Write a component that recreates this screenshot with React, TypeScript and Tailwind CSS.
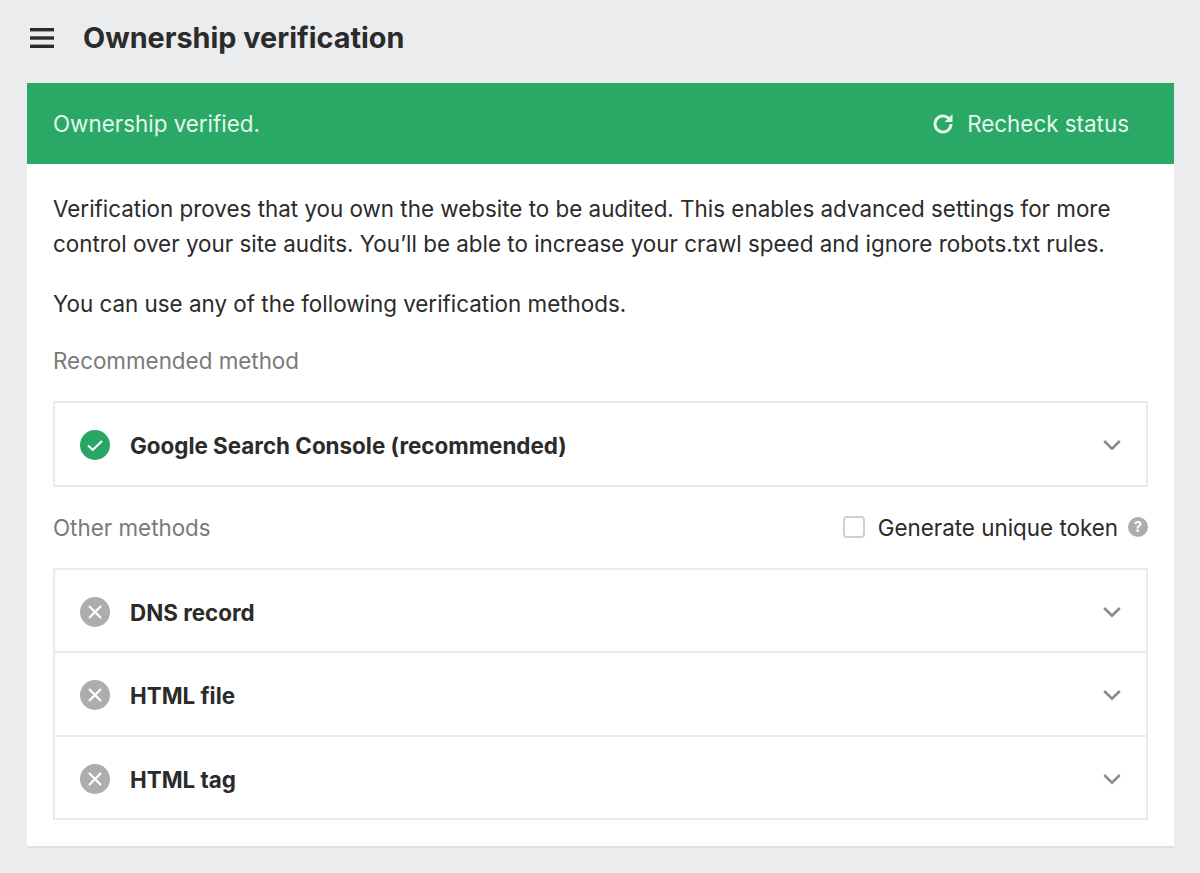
function StatusIcon({ ok }: { ok: boolean }) {
    return (
        <svg width="30" height="30" viewBox="0 0 30 30" className="shrink-0">
            <circle cx="15" cy="15" r="15" fill={ok ? "#27a763" : "#adadad"} />
            {ok ? (
                <path d="M8 15.5l4.8 4.3L22 11" fill="none" stroke="#fff" strokeWidth="2" />
            ) : (
                <path d="M9 9l12 12M21 9L9 21" fill="none" stroke="#fff" strokeWidth="2.2" />
            )}
        </svg>
    );
}

function Chevron() {
    return (
        <svg width="18" height="12" viewBox="0 0 18 12" fill="none" className="shrink-0">
            <path d="M1.2 2l7.8 7.6L16.8 2" stroke="#8c8c8c" strokeWidth="2.6" />
        </svg>
    );
}

function MethodRow({ label, ok, rowClass }: { label: string; ok: boolean; rowClass: string }) {
    return (
        <div className={`flex items-center pl-[25px] pr-[25px] pt-[2px] ${rowClass}`}>
            <StatusIcon ok={ok} />
            <span className="ml-[20px] flex-1 pt-[2px] text-[22.4px] font-bold text-[#2b2b2b]">{label}</span>
            <Chevron />
        </div>
    );
}

export default function App() {
    return (
        <div className="h-[873px] overflow-hidden bg-[#ebecee] pl-[27px] pr-[26px] font-['Inter',sans-serif] text-[#2b2b2b]">

            {/* Page title */}
            <div className="flex h-[83px] items-center pb-[7px]">
                <svg width="24" height="20" viewBox="0 0 24 20" className="ml-[3px] shrink-0">
                    <rect y="0" width="24" height="3.4" fill="#2b2b2b" />
                    <rect y="8.3" width="24" height="3.4" fill="#2b2b2b" />
                    <rect y="16.6" width="24" height="3.4" fill="#2b2b2b" />
                </svg>
                <h1 className="ml-[29px] text-[28.8px] font-bold">Ownership verification</h1>
            </div>

            <div className="h-[765px] border-b-2 border-[#dfe1e0] bg-white">

                {/* Status banner */}
                <div className="flex h-[81px] items-center justify-between bg-[#29a866] pl-[26px] pr-[45px] pt-[1px] text-[22.4px] text-[#e3f7ec]">
                    <span>Ownership verified.</span>
                    <div className="flex items-center gap-[12px]">
                        <svg width="24" height="24" viewBox="0 0 24 24" fill="none">
                            <path d="M20 12a8 8 0 1 1-2.4-5.7" stroke="#e3f7ec" strokeWidth="3" />
                            <path d="M21.5 2v8h-8z" fill="#e3f7ec" />
                        </svg>
                        <span>Recheck status</span>
                    </div>
                </div>

                <div className="px-[26px] pt-[27px] text-[22.4px]">
                    <p className="leading-[35px]">
                        Verification proves that you own the website to be audited. This enables advanced settings for more
                        control over your site audits. You’ll be able to increase your crawl speed and ignore robots.txt rules.
                    </p>
                    <p className="mt-[25px] leading-[35px]">You can use any of the following verification methods.</p>
                    <p className="mt-[22px] leading-[35px] text-[#7a7a7a]">Recommended method</p>

                    <div className="mt-[23px] border-2 border-[#ebebeb]">
                        <MethodRow label="Google Search Console (recommended)" ok rowClass="h-[82px]" />
                    </div>

                    <div className="mt-[23px] flex h-[35px] items-center justify-between">
                        <span className="text-[#7a7a7a]">Other methods</span>
                        <div className="flex items-center">
                            <span className="h-[22px] w-[22px] rounded-[4px] border-2 border-[#cfcfcf]" />
                            <span className="ml-[13px]">Generate unique token</span>
                            <span className="ml-[10px] flex h-[20px] w-[20px] items-center justify-center rounded-full bg-[#adadad] text-[15px] font-bold text-white">?</span>
                        </div>
                    </div>

                    <div className="mt-[23px] border-2 border-[#ebebeb]">
                        <MethodRow label="DNS record" ok={false} rowClass="h-[83px] border-b-2 border-[#ebebeb]" />
                        <MethodRow label="HTML file" ok={false} rowClass="h-[84px] border-b-2 border-[#ebebeb]" />
                        <MethodRow label="HTML tag" ok={false} rowClass="h-[81px]" />
                    </div>
                </div>
            </div>
        </div>
    );
}
